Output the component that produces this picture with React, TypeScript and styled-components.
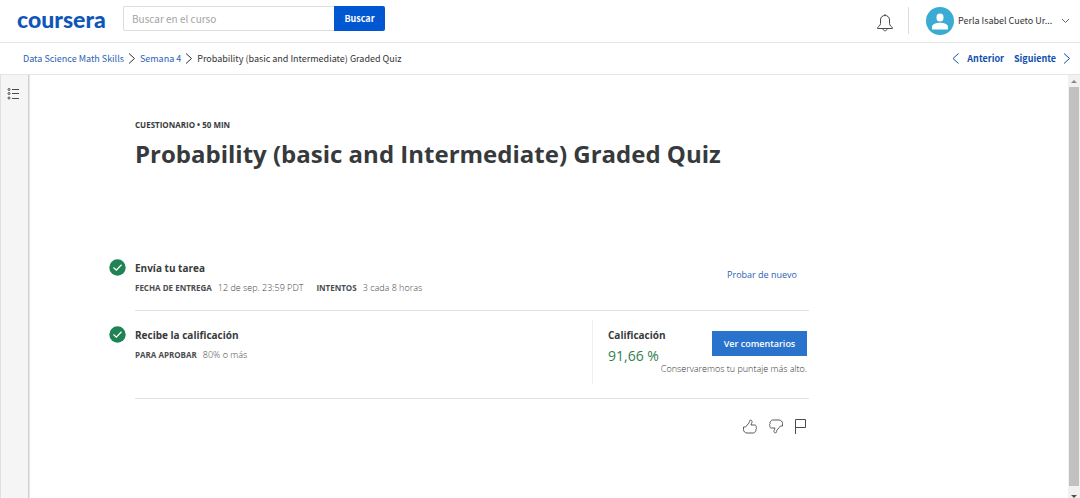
import React from "react";
import styled, { createGlobalStyle } from "styled-components";

const GlobalStyle = createGlobalStyle`
  * { box-sizing: border-box; }
  body {
    margin: 0;
    background: #fff;
    color: #373a3c;
    font-family: "Open Sans", sans-serif;
  }
  button, input { font: inherit; }
  a { text-decoration: none; }
`;

const uiFont = `"Noto Sans CJK SC", sans-serif`;

const Page = styled.div`
  display: flex;
  flex-direction: column;
  height: 100vh;
`;

const Header = styled.header`
  display: flex;
  align-items: center;
  padding: 0 10px 5px 17px;
  height: 43px;
  border-bottom: 1px solid #e5e5e5;
  font-family: ${uiFont};
`;

const Logo = styled.a`
  width: 106px;
  color: #0f56b9;
  font-family: Lato, sans-serif;
  font-weight: 900;
  font-size: 23px;
  line-height: 24px;
`;

const Search = styled.form`
  display: flex;
  height: 25px;
`;

const SearchInput = styled.input`
  width: 211px;
  padding: 0 8px;
  border: 1px solid #dcdcdc;
  border-right: 0;
  border-radius: 2px 0 0 2px;
  font-size: 10px;
  color: #373a3c;
  &::placeholder { color: #a3a3a3; opacity: 1; }
`;

const SearchButton = styled.button`
  width: 51px;
  padding: 0;
  border: 0;
  border-radius: 0 2px 2px 0;
  background: #0156d1;
  color: #fff;
  font-size: 9px;
  font-weight: 700;
  line-height: 16px;
`;

const Account = styled.div`
  display: flex;
  align-items: center;
  margin-left: auto;
  padding-top: 4px;
`;

const IconButton = styled.button`
  display: flex;
  padding: 0;
  border: 0;
  background: none;
  color: #4a4a4a;
`;

const BellButton = styled(IconButton)`
  padding-top: 3px;
`;

const Divider = styled.span`
  width: 1px;
  height: 27px;
  margin: 0 17px 0 14px;
  background: #dcdcdc;
`;

const Profile = styled(IconButton)`
  align-items: center;
  gap: 4px;
  color: #333;
  font-size: 9px;
  line-height: 16px;
`;

const ProfileName = styled.span`
  width: 99px;
  text-align: left;
  white-space: nowrap;
`;

const SubHeader = styled.div`
  display: flex;
  justify-content: space-between;
  align-items: center;
  height: 32px;
  padding: 0 9px 0 23px;
  border-bottom: 1px solid #e5e5e5;
  font-family: ${uiFont};
  font-size: 9px;
  line-height: 16px;
`;

const Trail = styled.nav`
  display: flex;
  align-items: center;
  gap: 4px;
  color: #333;
`;

const TrailLink = styled.a`
  color: #2a62b5;
`;

const StepLink = styled.a`
  display: flex;
  align-items: center;
  gap: 7px;
  color: #0f4fae;
  font-weight: 700;
`;

const Steps = styled(Trail)`
  gap: 10px;
`;

const Body = styled.div`
  display: flex;
  flex: 1;
  min-height: 0;
`;

const Sidebar = styled.aside`
  display: flex;
  justify-content: center;
  align-items: flex-start;
  width: 29px;
  padding: 12px 3px 0 0;
  background: #f5f5f5;
  border-left: 1px solid #e0e0e0;
  border-right: 1px solid #d0d0d0;
  box-shadow: 1px 0 1px #e8e8e8;
`;

const Main = styled.main`
  flex: 1;
  min-width: 0;
  padding: 42px 80px 0;
`;

const Content = styled.div`
  max-width: 700px;
`;

const Heading = styled.div`
  display: grid;
  gap: 5px;
  margin: 0 0 74px 26px;
`;

const Kicker = styled.p`
  margin: 0;
  font-size: 8px;
  font-weight: 700;
  line-height: 16px;
`;

const Title = styled.h1`
  margin: 0;
  font-size: 24px;
  font-weight: 700;
  line-height: 32px;
`;

const Task = styled.section`
  display: flex;
  gap: 9px;
`;

const Mark = styled.div`
  flex: none;
  width: 17px;
  padding-top: 15px;
  svg { display: block; }
`;

const TaskBody = styled.div`
  display: flex;
  flex: 1;
  justify-content: space-between;
  padding: 9px 0 14px;
  border-bottom: 1px solid #e1e1e1;
`;

const TaskText = styled.div`
  padding-top: 5px;
`;

const TaskTitle = styled.h2`
  margin: 0;
  font-size: 10px;
  font-weight: 700;
  line-height: 20px;
`;

const Facts = styled.dl`
  display: flex;
  gap: 6px;
  margin: 2px 0 0;
  line-height: 16px;
`;

const FactName = styled.dt`
  font-size: 8px;
  font-weight: 700;
  color: #4a4d50;
  dd + & { margin-left: 7px; }
`;

const FactValue = styled.dd`
  margin: 0;
  color: #444;
  font-size: 9px;
  font-weight: 300;
`;

const RetryButton = styled.button`
  align-self: center;
  margin-right: 12px;
  padding: 0;
  border: 0;
  background: none;
  color: #2a62b5;
  font-size: 9px;
  font-weight: 500;
  line-height: 16px;
`;

const Grade = styled.div`
  display: flex;
  justify-content: space-between;
  width: 217px;
  height: 64px;
  padding: 5px 2px 0 15px;
  border-left: 1px solid #efefef;
`;

const GradeResult = styled.div`
  min-width: 0;
`;

const Score = styled.p`
  margin: 0;
  color: #2f8050;
  font-size: 14px;
  line-height: 22px;
  white-space: nowrap;
`;

const GradeAction = styled.div`
  display: flex;
  flex-direction: column;
  align-items: flex-end;
  gap: 5px;
  padding-top: 6px;
`;

const PrimaryButton = styled.button`
  width: 95px;
  height: 25px;
  padding: 0;
  border: 0;
  background: #2a73cc;
  color: #fff;
  font-size: 9px;
  font-weight: 600;
`;

const Note = styled.p`
  margin: 0;
  color: #333;
  font-size: 9px;
  font-weight: 300;
  line-height: 16px;
  white-space: nowrap;
`;

const Feedback = styled.div`
  display: flex;
  justify-content: flex-end;
  gap: 10px;
  padding: 19px 2px 0 0;
`;

const Scrollbar = styled.div`
  display: flex;
  flex-direction: column;
  align-items: center;
  width: 12px;
  background: #f1f1f1;
`;

const ScrollThumb = styled.div`
  flex: 1;
  width: 10px;
  background: #c1c1c1;
`;

const ScrollArrow = styled.svg`
  display: block;
  width: 12px;
  height: 12px;
`;

const chevrons = {
  left: "M6.500 0.500 L1 5.500 L6.500 10.500",
  right: "M1 0.500 L6.500 5.500 L1 10.500",
};

function Chevron({ to }: { to: "left" | "right" }) {
  return (
    <svg width="8" height="11" viewBox="0 0 8 11" fill="none" stroke="currentColor" aria-hidden="true">
      <path d={chevrons[to]} />
    </svg>
  );
}

function CheckMark() {
  return (
    <svg width="17" height="17" viewBox="0 0 17 17" aria-label="Completado">
      <circle cx="8.500" cy="8.500" r="8.200" fill="#1f8354" />
      <path d="M4.500 8.600 L7.300 11.200 L12.500 5.700" fill="none" stroke="#fff" strokeWidth="1.300" />
    </svg>
  );
}

const thumbPath =
  "M1.500 8.500 H3.500 C4.500 7.500 5.500 6 7 4.500 C7.500 3.800 7.300 2 8.200 1.600 C9.500 1.300 10.300 2.500 10 3.800 C9.800 4.800 9 5.500 9 6.500 H12.500 C14 6.500 14.500 7.600 14 8.600 C14.800 9.300 14.600 10.500 13.900 11 C14.300 12 13.800 12.900 13 13.200 C12.800 14.300 12 14.500 11 14.500 H5 C3 14.500 1.500 13 1.500 11 Z";

export default function App() {
  return (
    <>
      <GlobalStyle />
      <Page>
        <Header>
          <Logo href="#">coursera</Logo>
          <Search onSubmit={(e) => e.preventDefault()}>
            <SearchInput placeholder="Buscar en el curso" aria-label="Buscar en el curso" />
            <SearchButton type="submit">Buscar</SearchButton>
          </Search>
          <Account>
            <BellButton aria-label="Notificaciones">
              <svg width="18" height="19" viewBox="0 0 18 19" fill="none" stroke="currentColor">
                <path d="M1.500 15.500 C1.500 13.500 4.500 13 4.500 10.500 V7 C4.500 4 6.500 2.500 9 2.500 S13.500 4 13.500 7 V10.500 C13.500 13 16.500 13.500 16.500 15.500 Z" />
                <path d="M9 2.500 V1 M7 15.500 C7 18.500 11 18.500 11 15.500" />
              </svg>
            </BellButton>
            <Divider />
            <Profile>
              <svg width="28" height="28" viewBox="0 0 28 28" aria-hidden="true">
                <circle cx="14" cy="14" r="14" fill="#3aabd2" />
                <rect x="10.500" y="6.500" width="7" height="8" rx="3.500" fill="#fff" />
                <path d="M6 22.500 V20 C6 17 10.500 15.800 14 15.800 S22 17 22 20 V22.500 Z" fill="#fff" />
              </svg>
              <ProfileName>Perla Isabel Cueto Ur...</ProfileName>
              <svg width="9" height="6" viewBox="0 0 9 6" fill="none" stroke="#666" aria-hidden="true">
                <path d="M1 1 L4.500 4.500 L8 1" />
              </svg>
            </Profile>
          </Account>
        </Header>
        <SubHeader>
          <Trail aria-label="Ruta">
            <TrailLink href="#">Data Science Math Skills</TrailLink>
            <Chevron to="right" />
            <TrailLink href="#">Semana 4</TrailLink>
            <Chevron to="right" />
            <span>Probability (basic and Intermediate) Graded Quiz</span>
          </Trail>
          <Steps aria-label="Lecciones">
            <StepLink href="#"><Chevron to="left" />Anterior</StepLink>
            <StepLink href="#">Siguiente<Chevron to="right" /></StepLink>
          </Steps>
        </SubHeader>
        <Body>
          <Sidebar>
            <IconButton aria-label="Contenido">
              <svg width="13" height="13" viewBox="0 0 13 13" fill="none" stroke="currentColor">
                <circle cx="2" cy="2.500" r="1" />
                <circle cx="2" cy="6.500" r="1" />
                <circle cx="2" cy="11" r="1" />
                <path d="M5 2.500 H12 M5 6.500 H12 M5 11.500 H12" />
              </svg>
            </IconButton>
          </Sidebar>
          <Main>
            <Content>
              <Heading>
                <Kicker>CUESTIONARIO • 50 MIN</Kicker>
                <Title>Probability (basic and Intermediate) Graded Quiz</Title>
              </Heading>
              <Task>
                <Mark><CheckMark /></Mark>
                <TaskBody>
                  <TaskText>
                    <TaskTitle>Envía tu tarea</TaskTitle>
                    <Facts>
                      <FactName>FECHA DE ENTREGA</FactName>
                      <FactValue>12 de sep. 23:59 PDT</FactValue>
                      <FactName>INTENTOS</FactName>
                      <FactValue>3 cada 8 horas</FactValue>
                    </Facts>
                  </TaskText>
                  <RetryButton>Probar de nuevo</RetryButton>
                </TaskBody>
              </Task>
              <Task>
                <Mark><CheckMark /></Mark>
                <TaskBody>
                  <TaskText>
                    <TaskTitle>Recibe la calificación</TaskTitle>
                    <Facts>
                      <FactName>PARA APROBAR</FactName>
                      <FactValue>80% o más</FactValue>
                    </Facts>
                  </TaskText>
                  <Grade>
                    <GradeResult>
                      <TaskTitle as="h3">Calificación</TaskTitle>
                      <Score>91,66 %</Score>
                    </GradeResult>
                    <GradeAction>
                      <PrimaryButton>Ver comentarios</PrimaryButton>
                      <Note>Conservaremos tu puntaje más alto.</Note>
                    </GradeAction>
                  </Grade>
                </TaskBody>
              </Task>
              <Feedback>
                <IconButton aria-label="Me gusta">
                  <svg width="16" height="17" viewBox="0 0 16 16" fill="none" stroke="currentColor" strokeWidth="0.900">
                    <path d={thumbPath} />
                  </svg>
                </IconButton>
                <IconButton aria-label="No me gusta">
                  <svg width="16" height="17" viewBox="0 0 16 16" fill="none" stroke="currentColor" strokeWidth="0.900">
                    <path d={thumbPath} transform="rotate(180 8 8)" />
                  </svg>
                </IconButton>
                <IconButton aria-label="Marcar">
                  <svg width="13" height="17" viewBox="0 0 13 17" fill="none" stroke="currentColor">
                    <path d="M1.500 16 V1.500 H11.500 V9.500 H1.500" />
                  </svg>
                </IconButton>
              </Feedback>
            </Content>
          </Main>
          <Scrollbar aria-hidden="true">
            <ScrollArrow viewBox="0 0 12 12"><path d="M3 8 L6 5 L9 8 Z" fill="#8a8a8a" /></ScrollArrow>
            <ScrollThumb />
            <ScrollArrow viewBox="0 0 12 12"><path d="M3 9 L6 12 L9 9 Z" fill="#505050" /></ScrollArrow>
          </Scrollbar>
        </Body>
      </Page>
    </>
  );
}
